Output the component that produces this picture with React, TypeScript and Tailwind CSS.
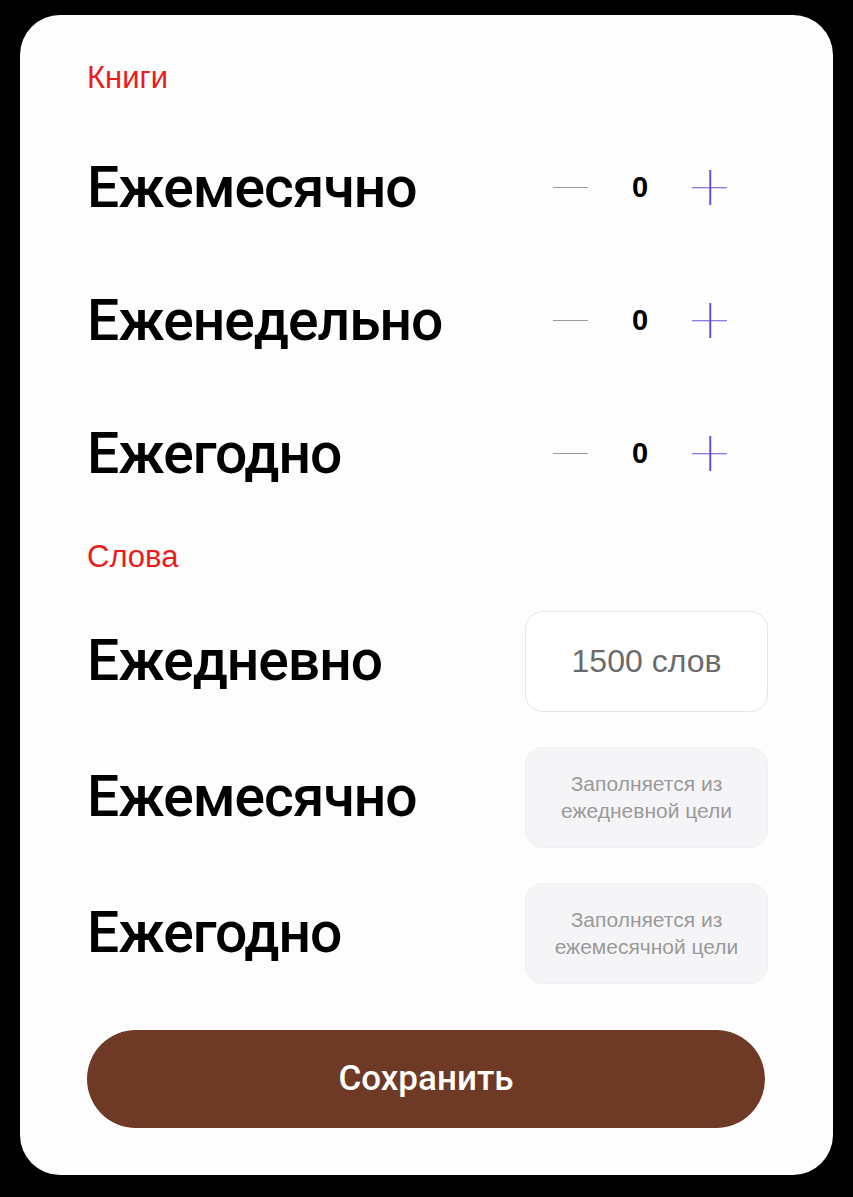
import { useState } from "react";

const sans = { fontFamily: "'Liberation Sans', Arial, sans-serif" };
const heading = "font-['Roboto',sans-serif] text-[57px] font-medium tracking-[-1px] text-black";

function Stepper({ value, onChange }: { value: number; onChange: (v: number) => void }) {
  return (
    <div className="flex items-center">
      <button
        onClick={() => onChange(Math.max(0, value - 1))}
        className="flex h-10 w-[36px] items-center justify-center"
      >
        <span className="block h-[1.5px] w-[35px] bg-[#9a9a9a]" />
      </button>
      <span className="w-[104px] text-center text-[29px] font-bold text-black">{value}</span>
      <button onClick={() => onChange(value + 1)} className="relative h-[36px] w-[36px]">
        <span className="absolute left-0 top-1/2 block h-[1.5px] w-[35px] -translate-y-1/2 bg-[#6b4fdc]" />
        <span className="absolute left-1/2 top-0 block h-[35px] w-[1.5px] -translate-x-1/2 bg-[#6b4fdc]" />
      </button>
    </div>
  );
}

function FilledBox({ lines }: { lines: [string, string] }) {
  return (
    <div className="flex h-[101px] w-[243px] items-center justify-center rounded-[18px] border border-[#f0f0f2] bg-[#f5f5f7] text-center text-[21px] leading-[27px] text-[#9a9a9a]">
      {lines[0]}
      <br />
      {lines[1]}
    </div>
  );
}

export default function App() {
  const [books, setBooks] = useState({ month: 0, week: 0, year: 0 });

  const rows = [
    { key: "month" as const, label: "Ежемесячно" },
    { key: "week" as const, label: "Еженедельно" },
    { key: "year" as const, label: "Ежегодно" },
  ];

  return (
    <div className="min-h-screen bg-black pl-[20px] pt-[15px]" style={sans}>
      <div className="flex h-[1160px] w-[813px] flex-col rounded-[40px] bg-[#fdfdfd] pl-[67px] pr-[65px] pt-[47px]">
        {/* Books */}
        <div className="text-[31px] leading-[32px] text-[#ea1c1c]">Книги</div>
        <div className="mt-[27px] flex flex-col">
          {rows.map((r) => (
            <div key={r.key} className="flex h-[133px] items-center justify-between pr-[40px]">
              <span className={heading}>{r.label}</span>
              <Stepper
                value={books[r.key]}
                onChange={(v) => setBooks({ ...books, [r.key]: v })}
              />
            </div>
          ))}
        </div>

        {/* Words */}
        <div className="mt-[21px] text-[31px] leading-[32px] text-[#ea1c1c]">Слова</div>
        <div className="mt-[20px] flex flex-col">
          <div className="flex h-[136px] items-center justify-between">
            <span className={heading}>Ежедневно</span>
            <div className="flex h-[101px] w-[243px] items-center justify-center rounded-[18px] border border-[#e6e6e6] bg-white text-[32px] text-[#6b6b6b]">
              1500 слов
            </div>
          </div>
          <div className="flex h-[136px] items-center justify-between">
            <span className={heading}>Ежемесячно</span>
            <FilledBox lines={["Заполняется из", "ежедневной цели"]} />
          </div>
          <div className="flex h-[136px] items-center justify-between">
            <span className={heading}>Ежегодно</span>
            <FilledBox lines={["Заполняется из", "ежемесячной цели"]} />
          </div>
        </div>

        <button className="mt-[29px] flex h-[98px] w-[678px] items-center justify-center rounded-full bg-[#6e3a25] font-['Roboto',sans-serif] text-[35px] font-medium text-white">
          Сохранить
        </button>
      </div>
    </div>
  );
}
